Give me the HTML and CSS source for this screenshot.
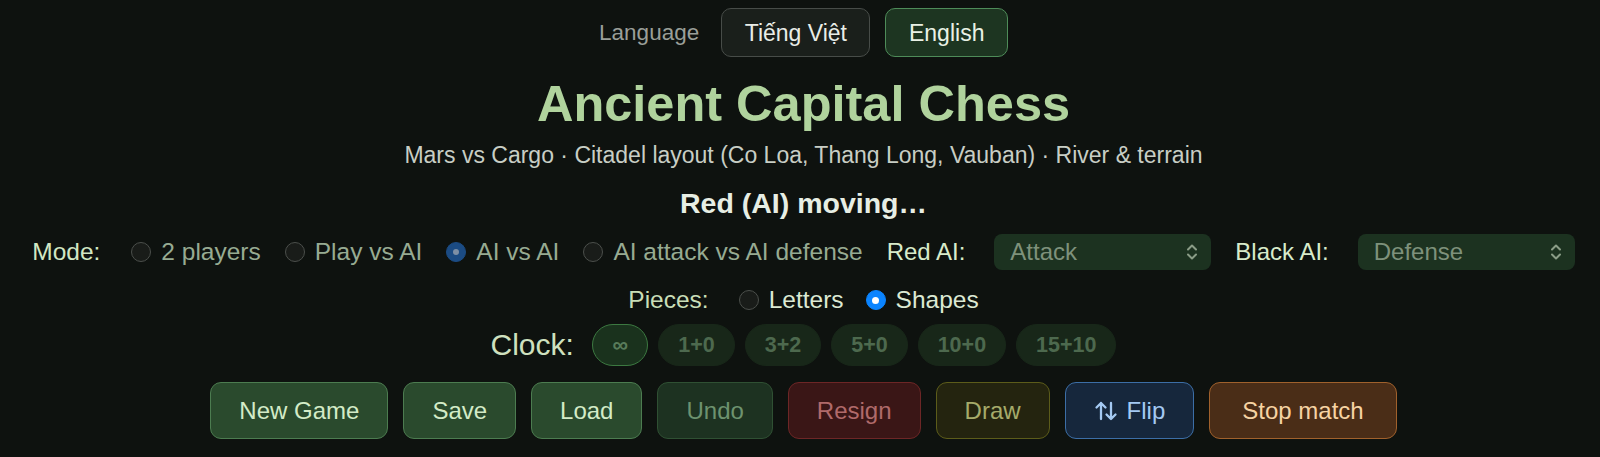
FILE: index.html
```html
<!DOCTYPE html>
<html lang="en">
<head>
<meta charset="utf-8">
<title>Ancient Capital Chess</title>
<link rel="stylesheet" href="styles.css">
</head>
<body>
<main class="page">
  <div class="lang-bar">
    <span class="lang-label">Language</span>
    <button class="lang-btn">Tiếng Việt</button>
    <button class="lang-btn active">English</button>
  </div>

  <h1 class="title">Ancient Capital Chess</h1>
  <p class="subtitle">Mars vs Cargo · Citadel layout (Co Loa, Thang Long, Vauban) · River &amp; terrain</p>
  <p class="status">Red (AI) moving…</p>

  <div class="mode-row">
    <span class="row-label mode-label">Mode:</span>
    <span class="radio dim"><span class="dot"></span>2 players</span>
    <span class="radio dim"><span class="dot"></span>Play vs AI</span>
    <span class="radio dim"><span class="dot dim-checked"></span>AI vs AI</span>
    <span class="radio dim"><span class="dot"></span>AI attack vs AI defense</span>
    <span class="row-label ai-label">Red AI:</span>
    <div class="select">
      <span>Attack</span>
      <svg class="chev" width="12" height="20" viewBox="0 0 12 20"><path d="M2 7.5 L6 3.5 L10 7.5 M2 12.5 L6 16.5 L10 12.5" fill="none" stroke="#8a9c86" stroke-width="2" stroke-linecap="round" stroke-linejoin="round"/></svg>
    </div>
    <span class="row-label ai-label">Black AI:</span>
    <div class="select">
      <span>Defense</span>
      <svg class="chev" width="12" height="20" viewBox="0 0 12 20"><path d="M2 7.5 L6 3.5 L10 7.5 M2 12.5 L6 16.5 L10 12.5" fill="none" stroke="#8a9c86" stroke-width="2" stroke-linecap="round" stroke-linejoin="round"/></svg>
    </div>
  </div>

  <div class="pieces-row">
    <span class="row-label pieces-label">Pieces:</span>
    <span class="radio bright"><span class="dot"></span>Letters</span>
    <span class="radio bright"><span class="dot checked"></span>Shapes</span>
  </div>

  <div class="clock-row">
    <span class="clock-label">Clock:</span>
    <span class="pill selected">∞</span>
    <span class="pill">1+0</span>
    <span class="pill">3+2</span>
    <span class="pill">5+0</span>
    <span class="pill">10+0</span>
    <span class="pill">15+10</span>
  </div>

  <div class="actions">
    <button class="btn green">New Game</button>
    <button class="btn green">Save</button>
    <button class="btn green">Load</button>
    <button class="btn undo">Undo</button>
    <button class="btn resign">Resign</button>
    <button class="btn draw">Draw</button>
    <button class="btn flip"><svg class="flip-icon" width="24" height="22" viewBox="0 0 24 22"><path d="M7 19 V3 M2.5 7.5 L7 3 L11.5 7.5 M17 3 V19 M12.5 14.5 L17 19 L21.5 14.5" fill="none" stroke="#a4c9f2" stroke-width="2.3" stroke-linecap="round" stroke-linejoin="round"/></svg>Flip</button>
    <button class="btn stop">Stop match</button>
  </div>
</main>
</body>
</html>
```

FILE: styles.css
```css
* { box-sizing: border-box; }

html, body {
  margin: 0;
  padding: 0;
  background: #0e120f;
}

body {
  font-family: "Liberation Sans", Arial, Helvetica, sans-serif;
  color: #dfe6dc;
}

.page {
  display: flex;
  flex-direction: column;
  align-items: center;
  padding: 0 0 0 7px;
}

/* language bar */
.lang-bar {
  margin-top: 8px;
  display: flex;
  align-items: center;
  gap: 15px;
}
.lang-label {
  font-size: 22.5px;
  color: #9a9f99;
  margin-right: 7px;
}
.lang-btn {
  font-family: inherit;
  font-size: 23px;
  line-height: 26px;
  padding: 10.5px 22.5px;
  border-radius: 10px;
  border: 1.5px solid #474c48;
  background: #1a1f1b;
  color: #e9ede7;
}
.lang-btn.active {
  background: #1d3521;
  border-color: #4e8c59;
  color: #e9f1e5;
}

/* headings */
.title {
  margin: 18px 0 0;
  font-size: 50.5px;
  line-height: 58px;
  font-weight: bold;
  color: #b0d39d;
}
.subtitle {
  margin: 9px 0 0;
  font-size: 23px;
  line-height: 27px;
  color: #c8cec5;
}
.status {
  margin: 18px 0 0;
  font-size: 28.5px;
  line-height: 33px;
  font-weight: bold;
  color: #e7eee4;
}

/* rows */
.mode-row {
  margin-top: 14px;
  height: 36px;
  display: flex;
  align-items: center;
  gap: 24px;
  font-size: 24.5px;
}
.row-label {
  color: #d2e7c3;
}
.mode-label { margin-right: 7px; }
.ai-label { margin-right: 5px; font-size: 24px; color: #d8ebca; }

.radio {
  display: inline-flex;
  align-items: center;
  white-space: nowrap;
}
.radio.dim { color: #97ab92; }
.radio.bright { color: #dce9d3; }

.dot {
  position: relative;
  width: 20px;
  height: 20px;
  margin-right: 10px;
  border-radius: 50%;
  border: 1.5px solid #4b4f4b;
  background: #191c19;
  flex: none;
}
.dot.dim-checked {
  background: #1b4b83;
  border-color: #1b4b83;
}
.dot.dim-checked::after {
  content: "";
  position: absolute;
  left: 50%;
  top: 50%;
  width: 6px;
  height: 6px;
  margin: -3px 0 0 -3px;
  border-radius: 50%;
  background: #7d8fa5;
}
.dot.checked {
  background: #0a84ff;
  border-color: #0a84ff;
}
.dot.checked::after {
  content: "";
  position: absolute;
  left: 50%;
  top: 50%;
  width: 7px;
  height: 7px;
  margin: -3.5px 0 0 -3.5px;
  border-radius: 50%;
  background: #ffffff;
}

.select {
  width: 217px;
  height: 36px;
  display: flex;
  align-items: center;
  justify-content: space-between;
  padding: 0 13px 0 16px;
  border-radius: 8px;
  background: #1c3220;
  color: #7e917b;
  font-size: 24px;
}

.pieces-row {
  margin-top: 16px;
  height: 28px;
  display: flex;
  align-items: center;
  gap: 22px;
  font-size: 24.5px;
}
.pieces-label { margin-right: 8px; color: #c9deb7; }

.clock-row {
  margin-top: 10px;
  display: flex;
  align-items: center;
  gap: 10px;
}
.clock-label {
  font-size: 30px;
  color: #cfe1bf;
  margin-right: 8px;
}
.pill {
  font-size: 21.5px;
  line-height: 24px;
  font-weight: bold;
  padding: 8px 19px;
  border-radius: 22px;
  border: 1.5px solid #182719;
  background: #182719;
  color: #4d694e;
}
.pill.selected {
  background: #1a321d;
  border-color: #3c7941;
  color: #587b5a;
  padding: 8px 19.5px;
}

/* action buttons */
.actions {
  margin-top: 16px;
  display: flex;
  gap: 15px;
}
.btn {
  font-family: inherit;
  font-size: 24px;
  line-height: 28px;
  padding: 13.5px 28px;
  border-radius: 11px;
  border: 1.5px solid;
  display: inline-flex;
  align-items: center;
}
.btn.green {
  background: #2a4a2d;
  border-color: #4c7c50;
  color: #d3ebc7;
}
.btn.undo {
  background: #1d3221;
  border-color: #2f5033;
  color: #6d926f;
}
.btn.resign {
  background: #3a1616;
  border-color: #6d2626;
  color: #b06a6a;
}
.btn.draw {
  background: #24240f;
  border-color: #5c5c1a;
  color: #a6ab6a;
}
.btn.flip {
  background: #16273c;
  border-color: #3c6ea6;
  color: #a4c9f2;
}
.flip-icon { margin-right: 9px; }
.btn.stop {
  background: #4a2d17;
  border-color: #a0612c;
  color: #f6d3a3;
  padding: 13.5px 32px;
}
```
